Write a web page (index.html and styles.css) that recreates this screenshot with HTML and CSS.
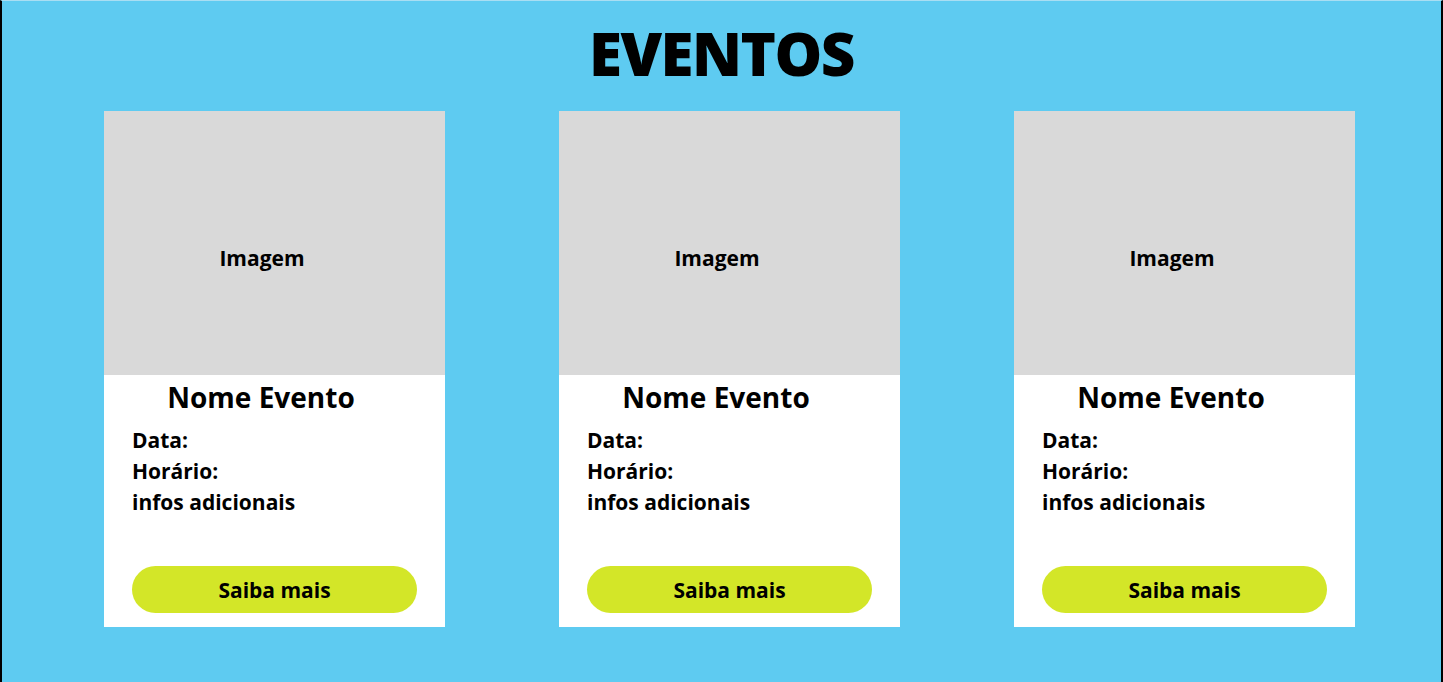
FILE: index.html
```html
<!DOCTYPE html>
<html lang="pt">
<head>
<meta charset="utf-8">
<title>Eventos</title>
<link rel="stylesheet" href="styles.css">
</head>
<body>
<main class="page">
  <h1 class="title">EVENTOS</h1>
  <section class="cards">
    <article class="card">
      <div class="card-image">Imagem</div>
      <h2 class="card-name">Nome Evento</h2>
      <ul class="card-info">
        <li>Data:</li>
        <li>Horário:</li>
        <li>infos adicionais</li>
      </ul>
      <button class="card-btn">Saiba mais</button>
    </article>
    <article class="card">
      <div class="card-image">Imagem</div>
      <h2 class="card-name">Nome Evento</h2>
      <ul class="card-info">
        <li>Data:</li>
        <li>Horário:</li>
        <li>infos adicionais</li>
      </ul>
      <button class="card-btn">Saiba mais</button>
    </article>
    <article class="card">
      <div class="card-image">Imagem</div>
      <h2 class="card-name">Nome Evento</h2>
      <ul class="card-info">
        <li>Data:</li>
        <li>Horário:</li>
        <li>infos adicionais</li>
      </ul>
      <button class="card-btn">Saiba mais</button>
    </article>
  </section>
</main>
</body>
</html>
```
FILE: styles.css
```css
html, body {
  margin: 0;
  padding: 0;
  background: #000;
}
body {
  font-family: "Open Sans", "Liberation Sans", sans-serif;
  font-weight: 700;
  color: #000;
}
.page {
  box-sizing: border-box;
  height: 682px;
  background: #5ecbf1;
  border-left: 2px solid #000;
  border-right: 2px solid #000;
  border-top: 1px solid #a9def3;
  overflow: hidden;
}
.title {
  margin: 12px 0 0;
  height: 80px;
  line-height: 80px;
  text-align: center;
  font-size: 60px;
  font-weight: 800;
  letter-spacing: -1.5px;
}
.cards {
  display: flex;
  gap: 114px;
  padding-left: 102px;
  margin-top: 18px;
}
.card {
  width: 341px;
  height: 516px;
  background: #fff;
  display: flex;
  flex-direction: column;
}
.card-image {
  box-sizing: border-box;
  height: 264px;
  background: #d9d9d9;
  display: flex;
  align-items: center;
  justify-content: center;
  padding: 30px 25px 0 0;
  font-size: 21px;
}
.card-name {
  margin: 0;
  height: 44px;
  line-height: 44px;
  font-size: 28px;
  font-weight: 700;
  text-align: center;
  padding-right: 27px;
}
.card-info {
  list-style: none;
  margin: 6px 0 0;
  padding: 0 28px;
  font-size: 21px;
  line-height: 31px;
}
.card-btn {
  margin: auto 28px 14px;
  height: 47px;
  border: none;
  border-radius: 24px;
  background: #d3e628;
  font-family: inherit;
  font-weight: 700;
  font-size: 21px;
  color: #000;
  padding: 0;
}
```
